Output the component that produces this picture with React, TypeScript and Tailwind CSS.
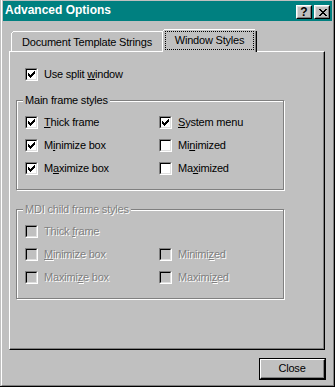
import React from "react";

const CHECK: [number, number][] = [
  [6, 0],
  [5, 1], [6, 1],
  [0, 2], [4, 2], [5, 2], [6, 2],
  [0, 3], [1, 3], [3, 3], [4, 3], [5, 3],
  [0, 4], [1, 4], [2, 4], [3, 4], [4, 4],
  [1, 5], [2, 5], [3, 5],
  [2, 6],
];

const XGLYPH: [number, number][] = [
  [0, 0], [1, 0], [6, 0], [7, 0],
  [1, 1], [2, 1], [5, 1], [6, 1],
  [2, 2], [3, 2], [4, 2], [5, 2],
  [3, 3], [4, 3],
  [2, 4], [3, 4], [4, 4], [5, 4],
  [1, 5], [2, 5], [5, 5], [6, 5],
  [0, 6], [1, 6], [6, 6], [7, 6],
];

function Pixels({ pts, w, h, className }: { pts: [number, number][]; w: number; h: number; className?: string }) {
  return (
    <svg width={w} height={h} viewBox={`0 0 ${w} ${h}`} shapeRendering="crispEdges" className={className}>
      {pts.map(([x, y], i) => (
        <rect key={i} x={x} y={y} width={1} height={1} fill="#000" />
      ))}
    </svg>
  );
}

function Box({ checked, disabled }: { checked?: boolean; disabled?: boolean }) {
  return (
    <div className="w-[13px] h-[13px] shrink-0 border border-t-[#808080] border-l-[#808080] border-r-white border-b-white">
      <div
        className={
          "relative w-full h-full border border-t-black border-l-black border-r-[#dfdfdf] border-b-[#dfdfdf] " +
          (disabled ? "bg-[#c0c0c0]" : "bg-white")
        }
      >
        {checked && <Pixels pts={CHECK} w={7} h={7} className="absolute left-px top-px" />}
      </div>
    </div>
  );
}

function Label({ pre, u, post, disabled }: { pre: string; u: string; post: string; disabled?: boolean }) {
  return (
    <span
      className={
        "leading-[13px] whitespace-nowrap " +
        (disabled ? "text-[#808080] [text-shadow:1px_1px_0_#ffffff]" : "text-black")
      }
    >
      {pre}
      <span className="underline">{u}</span>
      {post}
    </span>
  );
}

function CheckRow({
  pre,
  u,
  post,
  checked,
  disabled,
}: {
  pre: string;
  u: string;
  post: string;
  checked?: boolean;
  disabled?: boolean;
}) {
  return (
    <div className="flex items-center h-[13px] gap-[6px]">
      <Box checked={checked} disabled={disabled} />
      <Label pre={pre} u={u} post={post} disabled={disabled} />
    </div>
  );
}

function Group({ title, disabled, children }: { title: string; disabled?: boolean; children: React.ReactNode }) {
  return (
    <div className="relative ml-[6px] w-[268px] h-[90px] border border-[#808080] shadow-[inset_1px_1px_0_#ffffff,1px_1px_0_#ffffff]">
      <span
        className={
          "absolute left-[6px] -top-[7px] px-[2px] bg-[#c0c0c0] leading-[13px] whitespace-nowrap " +
          (disabled ? "text-[#808080] [text-shadow:1px_1px_0_#ffffff]" : "text-black")
        }
      >
        {title}
      </span>
      <div className="pt-[15px] pl-[8px] grid grid-cols-[134px_1fr] gap-y-[10px]">{children}</div>
    </div>
  );
}

export default function App() {
  return (
    <div className="w-[335px] h-[387px] overflow-hidden bg-[#c0c0c0] border-r border-b border-black pl-px font-['Liberation_Sans',Arial,sans-serif] text-[11px] tracking-[-0.2px] text-black">
      <div className="h-full flex flex-col border-l border-white border-r border-b border-r-[#808080] border-b-[#808080] px-px pt-px">
        {/* Title bar */}
        <div className="h-[20px] bg-[#008080] flex items-start shrink-0">
          <span className="pl-[2px] pt-[2px] text-white font-bold text-[12px] tracking-normal leading-[15px] whitespace-nowrap">
            Advanced Options
          </span>
          <div className="ml-auto mr-[2px] mt-[4px] flex gap-[2px]">
            <div className="w-[16px] h-[14px] border border-t-white border-l-white border-r-black border-b-black bg-[#c0c0c0]">
              <div className="w-full h-full border border-t-[#dfdfdf] border-l-[#dfdfdf] border-r-[#808080] border-b-[#808080] flex items-center justify-center">
                <span className="font-bold text-[12px] leading-[12px] tracking-normal text-black -mt-px">?</span>
              </div>
            </div>
            <div className="w-[16px] h-[14px] border border-t-white border-l-white border-r-black border-b-black bg-[#c0c0c0]">
              <div className="w-full h-full border border-t-[#dfdfdf] border-l-[#dfdfdf] border-r-[#808080] border-b-[#808080] flex items-center justify-center">
                <Pixels pts={XGLYPH} w={8} h={7} className="ml-px" />
              </div>
            </div>
          </div>
        </div>

        {/* Tabs */}
        <div className="mt-[8px] ml-[6px] mr-[7px] flex flex-col">
          <div className="h-[22px] flex items-end pl-[2px]">
            <div className="relative w-[151px] h-[20px] border-l border-t border-white flex items-center justify-center">
              <span className="absolute -left-px -top-px w-[2px] h-[2px] bg-[#c0c0c0]" />
              <span className="absolute left-0 top-0 w-px h-px bg-white" />
              <span className="whitespace-nowrap leading-[13px] pt-px">Document Template Strings</span>
            </div>
            <div className="relative z-10 -mb-px w-[95px] h-[23px] bg-[#c0c0c0] border-l border-t border-r border-l-white border-t-white border-r-black shadow-[inset_-1px_0_0_#808080] pt-px pl-[2px] pr-[2px] pb-[2px]">
              <span className="absolute -left-px -top-px w-[2px] h-[2px] bg-[#c0c0c0]" />
              <span className="absolute left-0 top-0 w-px h-px bg-white" />
              <span className="absolute -right-px -top-px w-[2px] h-[2px] bg-[#c0c0c0]" />
              <div className="w-[89px] h-[19px] border border-dotted border-black flex items-center justify-center">
                <span className="whitespace-nowrap leading-[13px]">Window Styles</span>
              </div>
            </div>
          </div>

          {/* Panel */}
          <div className="h-[299px] border-l border-t border-white border-r border-b border-r-black border-b-black shadow-[inset_-1px_-1px_0_#808080] pt-[16px] flex flex-col">
            <div className="ml-[15px]">
              <CheckRow pre="Use split " u="w" post="indow" checked />
            </div>
            <div className="mt-[19px]">
              <Group title="Main frame styles">
                <CheckRow pre="" u="T" post="hick frame" checked />
                <CheckRow pre="" u="S" post="ystem menu" checked />
                <CheckRow pre="M" u="i" post="nimize box" checked />
                <CheckRow pre="Mi" u="n" post="imized" />
                <CheckRow pre="M" u="a" post="ximize box" checked />
                <CheckRow pre="Ma" u="x" post="imized" />
              </Group>
            </div>
            <div className="mt-[19px]">
              <Group title="MDI child frame styles" disabled>
                <CheckRow pre="Thick " u="f" post="rame" disabled />
                <div />
                <CheckRow pre="" u="M" post="inimize box" disabled />
                <CheckRow pre="Minimi" u="z" post="ed" disabled />
                <CheckRow pre="Maximi" u="z" post="e box" disabled />
                <CheckRow pre="Maximi" u="z" post="ed" disabled />
              </Group>
            </div>
          </div>
        </div>

        {/* Close button */}
        <div className="mt-[8px] mr-[6px] flex justify-end">
          <div className="w-[67px] h-[22px] border border-black">
            <div className="w-full h-full border border-t-white border-l-white border-r-black border-b-black">
              <div className="w-full h-full border-r border-b border-[#808080] flex items-center justify-center">
                <span className="leading-[13px]">Close</span>
              </div>
            </div>
          </div>
        </div>
      </div>
    </div>
  );
}
